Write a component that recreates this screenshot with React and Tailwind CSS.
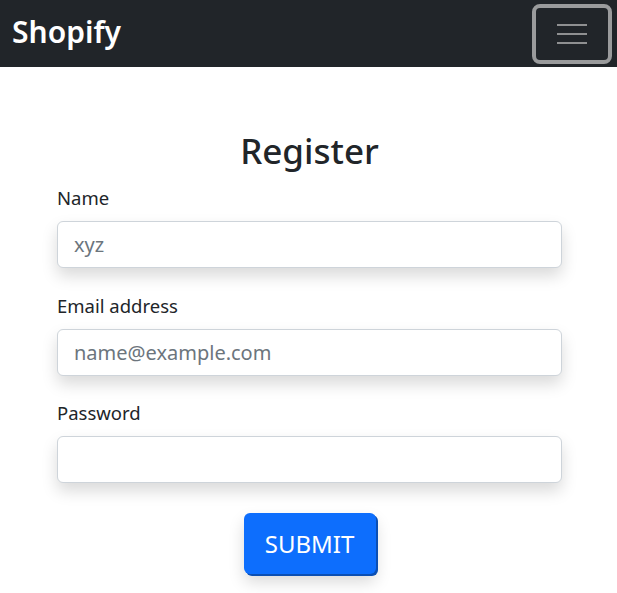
import React from 'react';

const Field = ({ label, type = 'text', placeholder }) => (
  <div className="flex flex-col">
    <label className="text-[18.5px] leading-[27px] text-[#212529] mb-[10px]">{label}</label>
    <input
      type={type}
      placeholder={placeholder}
      className="h-[47px] w-full px-4 text-[20px] text-[#212529] placeholder:text-[#6c757d] bg-white border border-[#ced4da] rounded-md outline-none shadow-[0_8px_16px_rgba(0,0,0,0.15)]"
    />
  </div>
);

const App = () => {
  return (
    <div className="min-h-screen bg-white font-['Noto_Sans',sans-serif]">
      {/* Navbar */}
      <nav className="h-[67px] bg-[#212529] flex items-center justify-between pl-3 pr-[5px]">
        <span className="text-white text-[30px] font-semibold leading-none -mt-[3px]">Shopify</span>
        <button className="w-[80px] h-[60px] border-4 border-[#9a9b9c] rounded-lg flex flex-col items-center justify-center gap-[7px]">
          <span className="block w-[30px] h-[2px] bg-[#8f9091]" />
          <span className="block w-[30px] h-[2px] bg-[#8f9091]" />
          <span className="block w-[30px] h-[2px] bg-[#8f9091]" />
        </button>
      </nav>

      {/* Form */}
      <div className="w-[505px] ml-[57px] pt-[60px]">
        <h1 className="text-center text-[35px] leading-[48px] font-medium text-[#212529] mb-[9px]">Register</h1>
        <div className="flex flex-col gap-[23.5px]">
          <Field label="Name" placeholder="xyz" />
          <Field label="Email address" type="email" placeholder="name@example.com" />
          <Field label="Password" type="password" placeholder="" />
        </div>
        <div className="flex justify-center mt-[30px]">
          <button className="w-[132px] h-[61px] bg-[#0d6efd] text-white text-[24px] rounded-md shadow-[2px_2px_0_#0b4fb3,0_8px_16px_rgba(0,0,0,0.15)]">
            SUBMIT
          </button>
        </div>
      </div>
    </div>
  );
};

export default App;
